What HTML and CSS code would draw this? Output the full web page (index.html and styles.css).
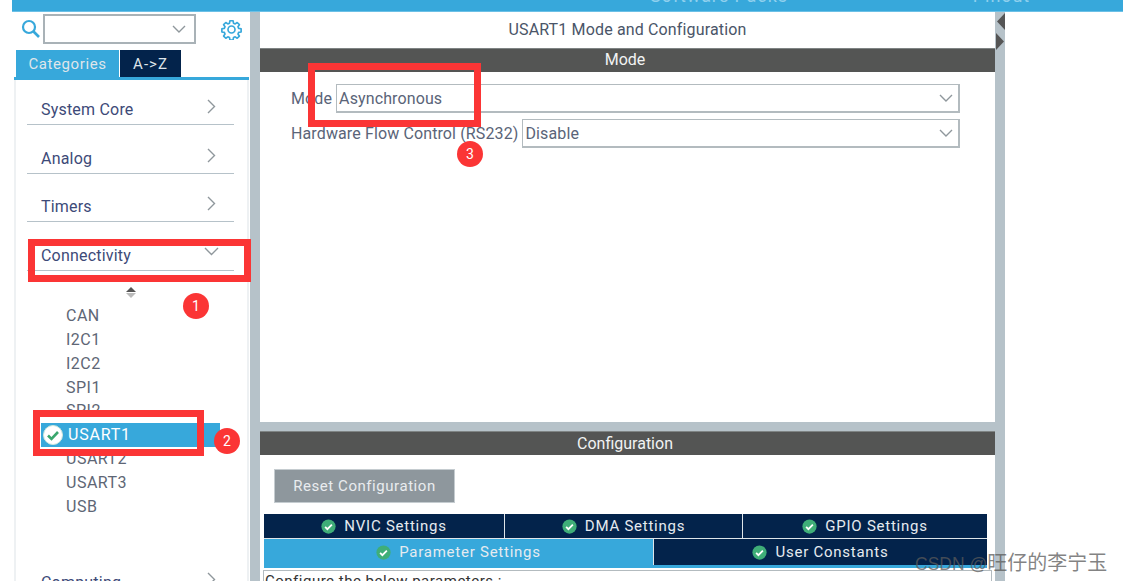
FILE: index.html
```html
<!DOCTYPE html>
<html lang="en">
<head>
<meta charset="utf-8">
<title>USART1 Mode and Configuration</title>
<link rel="stylesheet" href="styles.css">
</head>
<body>
<div class="app">
  <header class="topbar">
    <span class="top-sw">Software Packs</span>
    <span class="top-pin">Pinout</span>
  </header>
  <div class="workspace">
    <aside class="sidebar">
      <div class="search-row">
        <svg class="search-icon" width="19" height="20" viewBox="0 0 19 20"><circle cx="8" cy="8" r="6" fill="none" stroke="#37a8db" stroke-width="2.2"/><path d="M12.5 12.5L18 18" stroke="#37a8db" stroke-width="2.6" fill="none"/></svg>
        <div class="search-box"><svg class="chev" width="14" height="8" viewBox="0 0 14 8"><path d="M1 1l6 6 6-6" fill="none" stroke="#8f979c" stroke-width="1.4"/></svg></div>
        <svg class="gear" width="21" height="21" viewBox="0 0 24 24"><path d="M10.2 2h3.6l.5 2.8 1.9.8 2.3-1.6 2.500 2.500-1.600 2.300.8 1.900 2.800.5v3.600l-2.800.5-.8 1.900 1.600 2.300-2.500 2.500-2.300-1.600-1.900.8-.5 2.800h-3.600l-.5-2.800-1.900-.8-2.300 1.600-2.500-2.500 1.600-2.300-.8-1.900-2.800-.5v-3.600l2.800-.5.8-1.900-1.600-2.300 2.500-2.500 2.300 1.600 1.900-.8z" fill="none" stroke="#37a8db" stroke-width="1.9" stroke-linejoin="round"/><circle cx="12" cy="12" r="4" fill="none" stroke="#37a8db" stroke-width="1.9"/></svg>
      </div>
      <div class="side-tabs">
        <span class="side-tab active">Categories</span>
        <span class="side-tab">A-&gt;Z</span>
      </div>
      <nav class="side-body">
        <div class="cat"><span>System Core</span><svg class="cat-arrow" width="9" height="15" viewBox="0 0 9 15"><path d="M1 1l6.500 6.500L1 14" fill="none" stroke="#8f979c" stroke-width="1.4"/></svg></div>
        <div class="cat"><span>Analog</span><svg class="cat-arrow" width="9" height="15" viewBox="0 0 9 15"><path d="M1 1l6.500 6.500L1 14" fill="none" stroke="#8f979c" stroke-width="1.4"/></svg></div>
        <div class="cat"><span>Timers</span><svg class="cat-arrow" width="9" height="15" viewBox="0 0 9 15"><path d="M1 1l6.500 6.500L1 14" fill="none" stroke="#8f979c" stroke-width="1.4"/></svg></div>
        <div class="cat"><span>Connectivity</span><svg class="cat-arrow down" width="15" height="9" viewBox="0 0 15 9"><path d="M1 1l6.500 6.500L14 1" fill="none" stroke="#8f979c" stroke-width="1.4"/></svg></div>
        <div class="sort"><i class="up"></i><i class="dn"></i></div>
        <ul class="periph">
          <li>CAN</li>
          <li>I2C1</li>
          <li>I2C2</li>
          <li>SPI1</li>
          <li>SPI2</li>
          <li class="sel"><svg class="ok big" viewBox="0 0 20 20"><circle cx="10" cy="10" r="9.500" fill="#fff" stroke="#cfe8dc"/><path d="M5 10.500l3.500 3.500L15 7" fill="none" stroke="#3aa76d" stroke-width="2.600"/></svg>USART1</li>
          <li>USART2</li>
          <li>USART3</li>
          <li>USB</li>
        </ul>
        <div class="cat last"><span>Computing</span><svg class="cat-arrow" width="9" height="15" viewBox="0 0 9 15"><path d="M1 1l6.500 6.500L1 14" fill="none" stroke="#8f979c" stroke-width="1.4"/></svg></div>
      </nav>
    </aside>
    <main class="main">
      <section class="mode">
        <h1 class="title">USART1 Mode and Configuration</h1>
        <h2 class="bar">Mode</h2>
        <div class="fields">
          <div class="field"><label>Mode</label><div class="select"><span>Asynchronous</span><svg width="14" height="8" viewBox="0 0 14 8"><path d="M1 1l6 6 6-6" fill="none" stroke="#8f979c" stroke-width="1.4"/></svg></div></div>
          <div class="field"><label>Hardware Flow Control (RS232)</label><div class="select"><span>Disable</span><svg width="14" height="8" viewBox="0 0 14 8"><path d="M1 1l6 6 6-6" fill="none" stroke="#8f979c" stroke-width="1.4"/></svg></div></div>
        </div>
      </section>
      <section class="config">
        <h2 class="bar">Configuration</h2>
        <button class="reset">Reset Configuration</button>
        <div class="tabs-row top">
          <div class="tab t1"><svg class="ok" viewBox="0 0 20 20"><circle cx="10" cy="10" r="9.500" fill="#3fae78"/><path d="M5.500 10.500l3 3L14.500 7.500" fill="none" stroke="#fff" stroke-width="2.400"/></svg>NVIC Settings</div>
          <div class="tab t2"><svg class="ok" viewBox="0 0 20 20"><circle cx="10" cy="10" r="9.500" fill="#3fae78"/><path d="M5.500 10.500l3 3L14.500 7.500" fill="none" stroke="#fff" stroke-width="2.400"/></svg>DMA Settings</div>
          <div class="tab t3"><svg class="ok" viewBox="0 0 20 20"><circle cx="10" cy="10" r="9.500" fill="#3fae78"/><path d="M5.500 10.500l3 3L14.500 7.500" fill="none" stroke="#fff" stroke-width="2.400"/></svg>GPIO Settings</div>
        </div>
        <div class="tabs-row bottom">
          <div class="tab active p1"><svg class="ok" viewBox="0 0 20 20"><circle cx="10" cy="10" r="9.500" fill="#3fae78"/><path d="M5.500 10.500l3 3L14.500 7.500" fill="none" stroke="#fff" stroke-width="2.400"/></svg>Parameter Settings</div>
          <div class="tab p2"><svg class="ok" viewBox="0 0 20 20"><circle cx="10" cy="10" r="9.500" fill="#3fae78"/><path d="M5.500 10.500l3 3L14.500 7.500" fill="none" stroke="#fff" stroke-width="2.400"/></svg>User Constants</div>
        </div>
        <div class="params">Configure the below parameters :</div>
      </section>
    </main>
    <div class="handle">
      <svg width="10" height="38" viewBox="0 0 10 38"><path d="M10 1v17L2 9.500z" fill="#555"/><path d="M1 21v17l8-8.500z" fill="#555"/></svg>
    </div>
  </div>
  <div class="mark box-conn"></div>
  <div class="mark box-usart"></div>
  <div class="mark box-mode"></div>
  <div class="num n1">1</div>
  <div class="num n2">2</div>
  <div class="num n3">3</div>
  <div class="watermark">CSDN @<span class="wm-cn">旺仔的李宁玉</span></div>
</div>
</body>
</html>
```
FILE: styles.css
```css
* { box-sizing: border-box; }
html, body { margin: 0; height: 100%; background: #fff; overflow: hidden; }
body { font-family: Roboto, "Liberation Sans", sans-serif; color: #4a5568; }
h1, h2, ul { margin: 0; padding: 0; font-weight: 400; }
ul { list-style: none; }

.app { position: relative; width: 1123px; height: 581px; padding-left: 12px; overflow: hidden; }

.topbar { height: 12px; background: #37a8db; border-bottom: 1px solid #6cc0e6; overflow: hidden; color: #8fd0ee; font-size: 18px; letter-spacing: .9px; display: flex; align-items: flex-end; }
.top-sw { margin-left: 638px; margin-bottom: 5px; line-height: 20px; }
.top-pin { margin-left: 185px; margin-bottom: 5px; line-height: 20px; }

.workspace { display: flex; height: 569px; }

.sidebar { width: 238px; height: 569px; background: #fff; flex: none; overflow: hidden; }
.search-row { display: flex; align-items: center; height: 33px; padding: 1px 0 0 9px; }
.search-box { width: 153px; height: 30px; border: 2px solid #a9b2b7; margin-left: 3px; display: flex; align-items: center; justify-content: flex-end; padding-right: 8px; }
.gear { margin-left: 25px; }
.side-tabs { display: flex; height: 27px; margin-top: 5px; padding-left: 4px; font-size: 15px; }
.side-tab { width: 61px; height: 27px; background: #03234b; color: #dfe5ea; display: flex; align-items: center; justify-content: center; letter-spacing: 1px; }
.side-tab.active { width: 103px; margin-right: 1px; background: #37a8db; letter-spacing: .6px; }
.side-body { border-top: 3px solid #37a8db; background: #fff; height: 504px; margin-left: 2px; margin-right: 1px; padding: 0 15px 0 13px; box-shadow: inset 2px 0 0 #eef1f3, inset -2px 0 0 #eef1f3; }

.cat { height: 48.700px; display: flex; align-items: flex-end; justify-content: space-between; border-bottom: 1px solid #b6c2c9; padding: 0 18px 4px 14px; font-size: 16px; color: #3d4a78; letter-spacing: .2px; line-height: 21px; }
.cat:first-child { height: 45px; }
.cat-arrow { margin-bottom: 6px; }
.cat-arrow.down { margin-bottom: 10px; margin-right: -3px; }
.cat.last { margin-top: 29px; border: 0; }

.sort { display: flex; flex-direction: column; align-items: center; gap: 1px; padding-top: 16px; height: 33px; }
.sort i { display: block; width: 0; height: 0; border-left: 5px solid transparent; border-right: 5px solid transparent; }
.sort .up { border-bottom: 5px solid #555; }
.sort .dn { border-top: 5px solid #bbb; }

.periph { margin-left: -13px; margin-right: 15px; font-size: 16px; color: #5e6675; letter-spacing: .5px; }
.periph li { height: 23.850px; line-height: 23.850px; padding-left: 52px; }
.periph .sel { background: #37a8db; color: #fff; margin-left: 27px; padding-left: 0; height: 24px; line-height: 24px; display: flex; align-items: center; letter-spacing: .8px; width: 179px; }
.ok { width: 15px; height: 15px; flex: none; margin-right: 8px; }
.ok.big { width: 20px; height: 20px; margin: 0 5px 0 2px; }

.main { width: 745px; padding-left: 10px; background: #b6c2c9; display: flex; flex-direction: column; gap: 9px; flex: none; height: 569px; }
.mode { height: 410px; background: #fff; flex: none; }
.title { height: 36px; line-height: 35px; text-align: center; font-size: 16px; color: #4a5568; letter-spacing: .15px; }
.bar { height: 24px; line-height: 22px; background: #545554; border-top: 1px solid #7f8484; color: #f1f3f3; text-align: center; font-size: 16px; padding-right: 5px; }
.config .bar { line-height: 24px; }
.fields { padding: 12px 35px 0 31px; display: flex; flex-direction: column; gap: 6px; }
.field { display: flex; align-items: center; gap: 4px; height: 29px; font-size: 16px; color: #5a6478; letter-spacing: .12px; }
.select { flex: 1; height: 29px; border: 2px solid #b3bbbf; border-top-width: 1px; border-left-width: 1px; display: flex; align-items: center; justify-content: space-between; padding: 0 5px 0 2px; color: #5a6478; }

.config { flex: 1; background: #fff; min-height: 0; overflow: hidden; }
.reset { display: block; margin: 14px 0 0 14px; width: 181px; height: 34px; border: 1px solid #c5ccd0; background: #8e979d; color: #e9ecef; font: 15px Roboto, sans-serif; letter-spacing: .55px; padding: 0; }
.tabs-row { display: flex; margin-left: 4px; width: 723px; color: #e6ebf0; font-size: 15px; letter-spacing: .75px; }
.tabs-row.top { margin-top: 11px; height: 25px; }
.tabs-row.bottom { height: 29px; border-bottom: 3px solid #37a8db; }
.tab { background: #03234b; display: flex; align-items: center; justify-content: center; border-right: 1px solid #dfe5e9; border-bottom: 1px solid #dfe5e9; }
.t1 { width: 241px; } .t2 { width: 238px; } .t3 { width: 244px; border-right: 0; }
.p1 { width: 390px; background: #37a8db; border-bottom: 0; } .p2 { width: 333px; border-right: 0; border-bottom: 0; }
.params { margin: 2px 0 0 3px; width: 729px; height: 30px; border: 1px solid #b3bbbf; padding: 2px 0 0 1px; font-size: 15px; line-height: 17px; color: #333; letter-spacing: .5px; }

.handle { width: 10px; height: 569px; background: #b6c2c9; flex: none; }
.handle svg { display: block; }

.mark { position: absolute; border: 7px solid #fb3535; }
.box-conn { left: 28px; top: 239px; width: 223px; height: 43px; }
.box-usart { left: 33px; top: 410px; width: 171px; height: 46px; }
.box-mode { left: 308px; top: 63px; width: 173px; height: 64px; }
.num { position: absolute; width: 26px; height: 26px; border-radius: 50%; background: #fb3535; color: #fff; font-size: 14px; line-height: 26px; text-align: center; }
.n1 { left: 183px; top: 293px; }
.n2 { left: 214px; top: 428px; }
.n3 { left: 457px; top: 141px; }
.watermark { position: absolute; left: 915px; top: 547px; font: 17.500px "Liberation Sans", "Noto Sans CJK SC", sans-serif; color: rgba(90, 90, 90, .75); white-space: nowrap; }
.wm-cn { font-size: 20px; }
```
